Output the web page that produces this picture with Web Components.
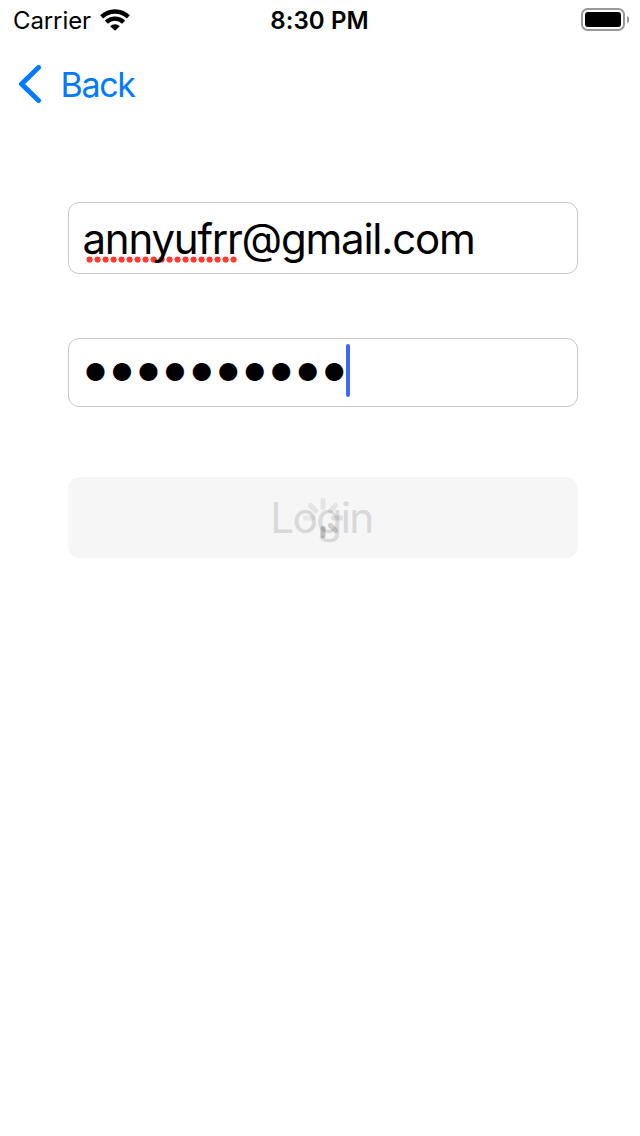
<!DOCTYPE html>
<html lang="en">
<head>
<meta charset="utf-8">
<title>Login</title>
<style>
body{margin:0;background:#fff;font-family:Inter,"Liberation Sans",sans-serif;color:#000}
</style>
</head>
<body>
<login-screen></login-screen>
<script>
const define = (name, html) => customElements.define(name, class extends HTMLElement {
  constructor() {
    super();
    const t = document.createElement('template');
    t.innerHTML = html;
    this.attachShadow({ mode: 'open' }).append(t.content.cloneNode(true));
  }
});

define('status-bar', `
<style>
:host{display:grid;grid-template-columns:1fr auto 1fr;align-items:center;height:40px;padding:0 11px 0 13px;box-sizing:border-box;font-size:24px;line-height:40px}
.left{display:flex;align-items:center;gap:9px}
.carrier{letter-spacing:-.1px;padding-top:2px;line-height:38px}
.time{font-weight:600;letter-spacing:.1px;padding-top:2px;line-height:38px;margin-left:-3px}
svg{display:block}
.battery{justify-self:end}
</style>
<div class="left"><span class="carrier">Carrier</span>
<svg width="30" height="22" viewBox="0 0 30 22"><g fill="none" stroke="#000" stroke-width="4.4"><path d="M1.7 7.9A19 19 0 0 1 28.3 7.9"/><path d="M6.4 13.2A12.2 12.2 0 0 1 23.6 13.2"/></g><path d="M15 21.8L10.2 17.3A6.8 6.8 0 0 1 19.8 17.3Z"/></svg></div>
<span class="time">8:30 PM</span>
<svg class="battery" width="48" height="24" viewBox="0 0 48 24"><rect x="1" y="1" width="42" height="21" rx="5.5" fill="none" stroke="#999" stroke-width="2"/><rect x="4" y="4" width="36" height="15" rx="3"/><path d="M46 8Q48.4 9 48.4 11.5T46 15Z" fill="#999"/></svg>`);

define('nav-back', `
<style>
:host{display:flex;align-items:center;height:88px;padding-left:18px;gap:18.5px;box-sizing:border-box;color:#007aff;font-size:34px;line-height:40px;letter-spacing:-1.35px}
svg{display:block}
span{padding-top:2px}
</style>
<svg width="24" height="40" viewBox="0 0 24 40"><path d="M20.5 3.5L3.5 20L20.5 36.5" fill="none" stroke="currentColor" stroke-width="5" stroke-linecap="round" stroke-linejoin="round"/></svg>
<span><slot></slot></span>`);

define('text-field', `
<style>
:host{display:flex;align-items:center;box-sizing:border-box;border:1px solid #c8c8c8;border-radius:11px;padding-left:14px;background:#fff}
</style>
<slot></slot>`);

define('email-value', `
<style>
:host{display:block;position:relative;z-index:0;padding-top:2px;margin-left:-.5px;font-size:42px;line-height:52px;letter-spacing:-1.22px;white-space:nowrap}
svg{position:absolute;left:3.5px;top:44.5px;z-index:-1}
</style>
<svg width="154" height="7"><path d="M3.6 3.5H152" stroke="#ff3b30" stroke-width="6.2" stroke-linecap="round" stroke-dasharray="0 8"/></svg><slot></slot>`);

define('secret-value', `
<style>
:host{display:flex;align-items:center;margin-left:1.5px;font-size:24px;line-height:52px;letter-spacing:4.6px}
span{padding-top:1px}
i{width:4px;height:53px;margin:-4px 0 0 -4.2px;border-radius:2px;background:#4169ef}
</style>
<span><slot></slot></span><i></i>`);

define('activity-spinner', `
<style>
:host{display:block;width:40px;height:40px}
svg{display:block}
</style>
<svg width="40" height="40" viewBox="-20 -20 40 40" stroke="#3c3c43" stroke-width="5" stroke-linecap="round">
<path d="M0-17.7V-10.5" opacity=".09"/><path d="M0-17.7V-10.5" opacity=".09" transform="rotate(45)"/><path d="M0-17.7V-10.5" opacity=".12" transform="rotate(90)"/><path d="M0-17.7V-10.5" opacity=".2" transform="rotate(135)"/><path d="M0-17.7V-10.5" opacity=".3" transform="rotate(180)"/><path d="M0-17.7V-10.5" opacity=".01" transform="rotate(225)"/><path d="M0-17.7V-10.5" opacity=".07" transform="rotate(270)"/><path d="M0-17.7V-10.5" opacity=".09" transform="rotate(315)"/></svg>`);

define('login-button', `
<style>
:host{display:grid;place-items:center;box-sizing:border-box;height:81px;border-radius:12px;background:#f6f6f6;color:#d9d9db;font-size:42.5px;line-height:52px}
span,activity-spinner{grid-area:1/1}
span{letter-spacing:-1.7px;padding-right:3px}
</style>
<span><slot></slot></span><activity-spinner></activity-spinner>`);

define('login-screen', `
<style>
:host{display:flex;flex-direction:column;width:640px;height:1136px;background:#fff}
main{display:flex;flex-direction:column;padding:74px 62px 0 68px}
.email{height:72px}
.secret{height:69px;margin-top:64px}
login-button{margin-top:70px}
</style>
<status-bar></status-bar>
<nav-back>Back</nav-back>
<main>
<text-field class="email"><email-value>annyufrr@gmail.com</email-value></text-field>
<text-field class="secret"><secret-value>●●●●●●●●●●</secret-value></text-field>
<login-button>Login</login-button>
</main>`);
</script>
</body>
</html>
